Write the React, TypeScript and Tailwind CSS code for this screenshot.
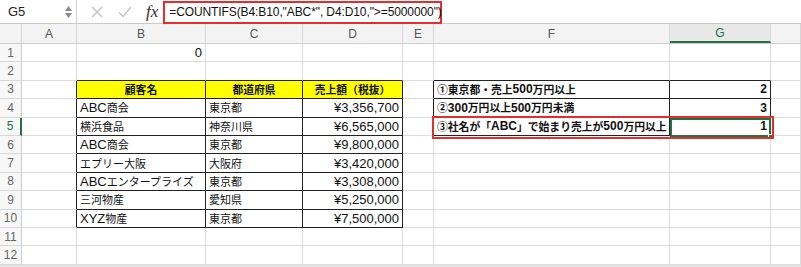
import React from "react";

const colW = [
  "w-[22px]",
  "w-[55px]",
  "w-[129px]",
  "w-[97px]",
  "w-[100px]",
  "w-[31px]",
  "w-[236px]",
  "w-[101px]",
  "flex-1",
];

type Cell = { t: string; align?: "l" | "r" | "c"; bold?: boolean; yellow?: boolean };

const data: Record<number, Record<number, Cell>> = {
  1: { 2: { t: "0", align: "r" } },
  3: {
    2: { t: "顧客名", align: "c", bold: true, yellow: true },
    3: { t: "都道府県", align: "c", bold: true, yellow: true },
    4: { t: "売上額（税抜）", align: "c", bold: true, yellow: true },
    6: { t: "①東京都・売上500万円以上", bold: true },
    7: { t: "2", align: "r", bold: true },
  },
  4: {
    2: { t: "ABC商会" },
    3: { t: "東京都" },
    4: { t: "¥3,356,700", align: "r" },
    6: { t: "②300万円以上500万円未満", bold: true },
    7: { t: "3", align: "r", bold: true },
  },
  5: {
    2: { t: "横浜食品" },
    3: { t: "神奈川県" },
    4: { t: "¥6,565,000", align: "r" },
    6: { t: "③社名が「ABC」で始まり売上が500万円以上", bold: true },
    7: { t: "1", align: "r", bold: true },
  },
  6: { 2: { t: "ABC商会" }, 3: { t: "東京都" }, 4: { t: "¥9,800,000", align: "r" } },
  7: { 2: { t: "エプリー大阪" }, 3: { t: "大阪府" }, 4: { t: "¥3,420,000", align: "r" } },
  8: { 2: { t: "ABCエンタープライズ" }, 3: { t: "東京都" }, 4: { t: "¥3,308,000", align: "r" } },
  9: { 2: { t: "三河物産" }, 3: { t: "愛知県" }, 4: { t: "¥5,250,000", align: "r" } },
  10: { 2: { t: "XYZ物産" }, 3: { t: "東京都" }, 4: { t: "¥7,500,000", align: "r" } },
};

function darkRight(r: number, c: number) {
  if (r >= 3 && r <= 10 && c >= 1 && c <= 4) return true;
  if (r >= 3 && r <= 5 && c >= 5 && c <= 7) return true;
  return false;
}
function darkBottom(r: number, c: number) {
  if (r >= 2 && r <= 10 && c >= 2 && c <= 4) return true;
  if (r >= 2 && r <= 5 && c >= 6 && c <= 7) return true;
  return false;
}

const font = { fontFamily: '"Liberation Sans", "Noto Sans CJK JP", sans-serif' };

const cjkRe = /([\u2460-\u24ff\u3000-\u30ff\u3400-\u9fff\uff00-\uff60]+)/;

function Mixed({ t, bold }: { t: string; bold?: boolean }) {
  const parts = t.split(cjkRe).filter((p) => p.length > 0);
  return (
    <>
      {parts.map((p, i) =>
        cjkRe.test(p) ? (
          <span
            key={i}
            className={bold ? "text-[10.8px]" : "text-[11px]"}
            style={{ fontFamily: '"Noto Sans CJK JP", sans-serif' }}
          >
            {p}
          </span>
        ) : (
          <span key={i}>{p}</span>
        )
      )}
    </>
  );
}

function GridRow({ r }: { r: number }) {
  const rowData = data[r] || {};
  return (
    <div className="flex h-[18.4px]">
      <div
        className={
          "w-[22px] shrink-0 flex items-center justify-center text-[12px] bg-[#f7f7f7] border-b border-[#d8d8d8] " +
          (r === 5 ? "text-[#217346] border-r-2 border-r-[#217346]" : "text-[#666] border-r border-r-[#cfcfcf]")
        }
      >
        {r}
      </div>
      {[1, 2, 3, 4, 5, 6, 7, 8].map((c) => {
        const cell = rowData[c];
        const cls = [
          colW[c],
          "shrink-0 relative flex items-center overflow-visible whitespace-nowrap leading-none text-[#111] border-r border-b border-[#dcdcdc]",
          darkRight(r, c) ? "border-r-[#222]" : "",
          darkBottom(r, c) ? "border-b-[#222]" : "",
          cell?.yellow ? "bg-[#ffff00]" : "bg-white",
          cell?.bold ? "font-bold text-[12px]" : "text-[13px]",
          cell?.align === "r" ? "justify-end pr-[3px]" : cell?.align === "c" ? "justify-center" : "pl-[3px]",
        ].join(" ");
        return (
          <div key={c} className={cls}>
            {cell ? <Mixed t={cell.t} bold={cell.bold} /> : null}
          </div>
        );
      })}
    </div>
  );
}

export default function App() {
  const headers = ["", "A", "B", "C", "D", "E", "F", "G", ""];
  return (
    <div className="w-[801px] h-[267px] bg-[#e4e4e4] overflow-hidden relative" style={font}>
      {/* Formula bar */}
      <div className="flex h-[24px] items-center bg-white border-b border-[#c9c9c9]">
        <div className="w-[77px] h-full flex items-center border-r border-[#d0d0d0]">
          <span className="pl-[8px] text-[13px] text-[#222] flex-1">G5</span>
          <div className="flex flex-col items-center mr-[4px] gap-[2px]">
            <svg width="7" height="5" viewBox="0 0 7 5"><path d="M0 5 L3.5 0 L7 5 Z" fill="#8a8a8a" /></svg>
            <svg width="7" height="5" viewBox="0 0 7 5"><path d="M0 0 L3.5 5 L7 0 Z" fill="#8a8a8a" /></svg>
          </div>
        </div>
        <div className="flex items-center h-full">
          <svg className="ml-[14px]" width="12" height="12" viewBox="0 0 12 12">
            <path d="M1 1 L11 11 M11 1 L1 11" stroke="#c4c4c4" strokeWidth="1.5" />
          </svg>
          <svg className="ml-[15px]" width="14" height="12" viewBox="0 0 14 12">
            <path d="M1 6.5 L5 10.5 L13 1" stroke="#c4c4c4" strokeWidth="1.5" fill="none" />
          </svg>
          <span
            className="ml-[14px] text-[17px] italic text-[#333] leading-none"
            style={{ fontFamily: '"Liberation Serif", serif' }}
          >
            fx
          </span>
        </div>
        <div className="ml-[5px] h-[23px] mt-[1px] w-[279px] border-2 border-[#e52d2d] flex items-center pl-[4px] text-[12px] font-medium tracking-[-0.1px] text-[#111] whitespace-nowrap">
          =COUNTIFS(B4:B10,"ABC*", D4:D10,"&gt;=5000000")
        </div>
        <div className="flex-1" />
      </div>

      {/* Column headers */}
      <div className="flex h-[20px] bg-[#f3f3f3] border-b border-[#cfcfcf]">
        {headers.map((h, i) => (
          <div
            key={i}
            className={
              colW[i] +
              " shrink-0 flex items-center justify-center text-[12px] border-r border-[#d6d6d6] " +
              (h === "G" ? "text-[#217346] bg-[#e8e8e8] border-b-2 border-b-[#217346]" : "text-[#555]")
            }
          >
            {h}
          </div>
        ))}
      </div>

      {/* Grid */}
      <div className="relative">
        {[1, 2, 3, 4, 5, 6, 7, 8, 9, 10, 11, 12].map((r) => (
          <GridRow key={r} r={r} />
        ))}
        {/* selection G5 */}
        <div className="absolute left-[670px] top-[74px] w-[101px] h-[19px] border-2 border-[#217346] pointer-events-none" />
        <div className="absolute left-[768px] top-[90px] w-[5px] h-[5px] bg-[#217346] border border-white" />
        {/* red annotation box */}
        <div className="absolute left-[432px] top-[72px] w-[342px] h-[23px] border-2 border-[#e52d2d] pointer-events-none" />
      </div>
    </div>
  );
}
